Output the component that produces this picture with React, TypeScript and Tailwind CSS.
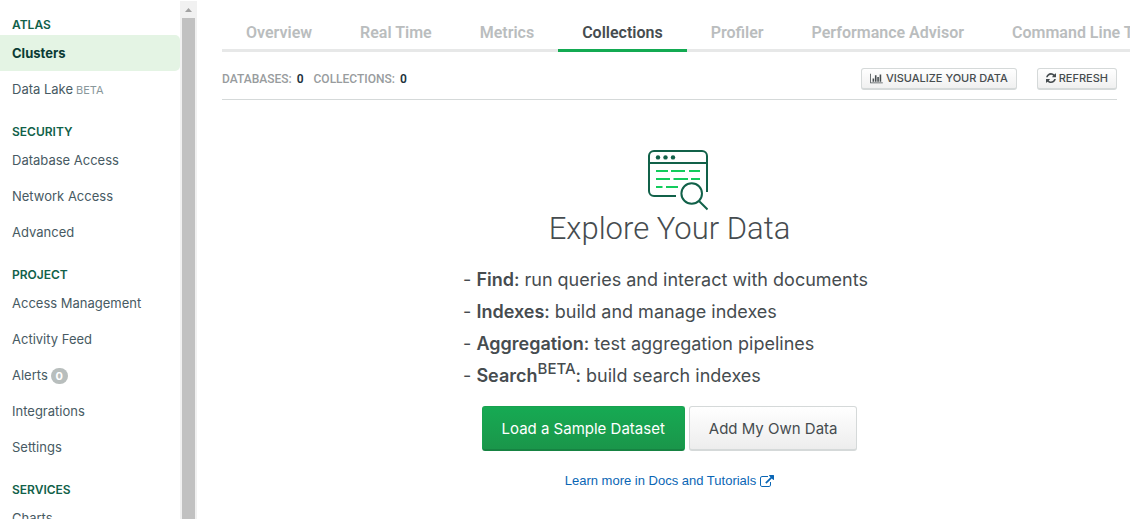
import type { ReactNode } from "react";

type NavItem = { label: string; beta?: boolean; count?: number; active?: boolean };
type NavSection = { title: string; items: NavItem[] };

const sections: NavSection[] = [
  { title: "ATLAS", items: [{ label: "Clusters", active: true }, { label: "Data Lake", beta: true }] },
  {
    title: "SECURITY",
    items: [{ label: "Database Access" }, { label: "Network Access" }, { label: "Advanced" }],
  },
  {
    title: "PROJECT",
    items: [
      { label: "Access Management" },
      { label: "Activity Feed" },
      { label: "Alerts", count: 0 },
      { label: "Integrations" },
      { label: "Settings" },
    ],
  },
  { title: "SERVICES", items: [{ label: "Charts" }] },
];

const tabs = [
  "Overview",
  "Real Time",
  "Metrics",
  "Collections",
  "Profiler",
  "Performance Advisor",
  "Command Line Tools",
];

function ChartIcon() {
  return (
    <svg viewBox="0 0 2048 1792" className="h-[11px] w-[13px] shrink-0" fill="currentColor" aria-hidden="true">
      <path d="M640 896v512h-256v-512h256zm384-512v1024h-256v-1024h256zm1024 1152v128h-2048v-1536h128v1408h1920zm-640-896v768h-256v-768h256zm384-384v1152h-256v-1152h256z" />
    </svg>
  );
}

function RefreshIcon() {
  return (
    <svg viewBox="0 0 1536 1664" className="h-[11px] w-2.5 shrink-0" fill="currentColor" aria-hidden="true">
      <path d="M1511 928q0 5-1 7-64 268-268 434.5t-478 166.500q-146 0-282.500-55t-243.500-157l-129 129q-19 19-45 19t-45-19-19-45v-448q0-26 19-45t45-19h448q26 0 45 19t19 45-19 45l-137 137q71 66 161 102t187 36q134 0 250-65t186-179q11-17 53-117 8-23 30-23h192q13 0 22.500 9.500t9.500 22.500zm25-800v448q0 26-19 45t-45 19h-448q-26 0-45-19t-19-45 19-45l138-138q-148-137-349-137-134 0-250 65t-186 179q-11 17-53 117-8 23-30 23h-199q-13 0-22.500-9.500t-9.500-22.500v-7q65-268 270-434.500t480-166.500q146 0 284 55.500t245 156.500l130-129q19-19 45-19t45 19 19 45z" />
    </svg>
  );
}

function ExternalIcon() {
  return (
    <svg viewBox="0 0 1792 1664" className="h-[13px] w-3.5 shrink-0" fill="currentColor" aria-hidden="true">
      <path d="M1408 928v320q0 119-84.500 203.500t-203.500 84.500h-832q-119 0-203.500-84.500t-84.500-203.500v-832q0-119 84.500-203.500t203.500-84.500h704q14 0 23 9t9 23v64q0 14-9 23t-23 9h-704q-66 0-113 47t-47 113v832q0 66 47 113t113 47h832q66 0 113-47t47-113v-320q0-14 9-23t23-9h64q14 0 23 9t9 23zm384-864v512q0 26-19 45t-45 19-45-19l-176-176-652 652q-10 10-23 10t-23-10l-114-114q-10-10-10-23t10-23l652-652-176-176q-19-19-19-45t19-45 45-19h512q26 0 45 19t19 45z" />
    </svg>
  );
}

function ExploreIllustration() {
  return (
    <svg viewBox="0 0 62 63" className="h-[63px] w-[62px]" fill="none" aria-hidden="true">
      <g stroke="#116149" strokeWidth="2">
        <path d="M30 48H8a5 5 0 0 1-5-5V8a5 5 0 0 1 5-5h48a5 5 0 0 1 5 5v36" />
        <path d="M3 15h58" />
        <circle cx="45.700" cy="45.500" r="10.300" />
        <path d="M53 53l8.500 8.500" />
      </g>
      <g fill="#116149">
        <circle cx="12" cy="9.400" r="2.200" />
        <circle cx="19.500" cy="9.400" r="2.200" />
        <circle cx="27" cy="9.400" r="2.200" />
      </g>
      <path
        d="M10 23h12M25 23h14M43 23h11M10 31h14M27.500 31h14.500M45 31h9M10 39h6.500M20 39h12"
        stroke="#13cc5c"
        strokeWidth="2"
      />
    </svg>
  );
}

function SmallButton({ children }: { children: ReactNode }) {
  return (
    <button
      type="button"
      className="flex h-[22px] items-center gap-[3px] rounded-[3px] border border-b-2 border-[#d5d9d9] bg-gradient-to-b from-white to-[#f0f0f0] px-2 text-[11px] font-medium text-[#464c4f]"
    >
      {children}
    </button>
  );
}

function Feature({ name, sup, children }: { name: string; sup?: string; children: ReactNode }) {
  return (
    <li>
      - <strong className="font-semibold">{name}</strong>
      {sup && <sup className="-top-2 text-[15px] font-medium">{sup}</sup>}
      <span className="font-medium">:</span> {children}
    </li>
  );
}

export default function App() {
  return (
    <div className="flex h-screen overflow-hidden bg-white font-['Inter','Liberation_Sans',sans-serif] text-[#464c4f]">
      <nav aria-label="Project" className="w-[180px] shrink-0 overflow-hidden">
        {sections.map((section) => (
          <section key={section.title}>
            <h2 className="flex h-[35px] items-end pb-0.5 pl-3 text-xs leading-4 font-semibold text-[#116149]">
              {section.title}
            </h2>
            <ul>
              {section.items.map((item) => (
                <li key={item.label}>
                  <a
                    href="#"
                    aria-current={item.active ? "page" : undefined}
                    className={
                      item.active
                        ? "flex h-9 items-center rounded-r-[5px] bg-[#e4f4e4] pt-0.5 pl-3 text-[13px] font-bold text-[#0b3b35]"
                        : "flex h-9 items-center gap-[3px] pt-0.5 pl-3 text-[13px] text-[#475a63]"
                    }
                  >
                    {item.label}
                    {item.beta && <span className="text-[11px] text-[#89979b]">BETA</span>}
                    {item.count !== undefined && (
                      <span className="flex h-4 w-[17px] items-center justify-center rounded-full bg-[#b8bebd] text-[11px] font-bold text-white">
                        {item.count}
                      </span>
                    )}
                  </a>
                </li>
              ))}
            </ul>
          </section>
        ))}
      </nav>

      <div aria-hidden="true" className="mt-px flex w-[17px] shrink-0 flex-col items-center bg-[#f1f1f1]">
        <div className="flex h-[17px] shrink-0 items-center justify-center">
          <svg viewBox="0 0 7 4" className="h-1 w-[7px]" fill="#a3a3a3">
            <path d="M3.500 0 7 4H0z" />
          </svg>
        </div>
        <div className="w-[13px] grow bg-[#c1c1c1]" />
      </div>

      <main className="min-w-0 grow pt-3.5 pl-[25px]">
        <div className="overflow-hidden">
          <div role="tablist" className="flex min-w-max font-['Roboto',sans-serif]">
            {tabs.map((tab) => (
              <button
                key={tab}
                type="button"
                role="tab"
                aria-selected={tab === "Collections"}
                className={
                  tab === "Collections"
                    ? "h-[38px] border-b-[3px] border-[#13aa52] px-6 pt-0.5 text-base font-semibold text-[#464c4f]"
                    : "h-[38px] border-b-[3px] border-[#e7e8e8] px-6 pt-0.5 text-base font-semibold text-[#babdbe]"
                }
              >
                {tab}
              </button>
            ))}
          </div>
        </div>

        <div className="mr-[13px]">
          <div className="flex h-12 items-center justify-between border-b border-[#d5d9d9] pt-1.5">
            <dl className="flex gap-2.5 font-['Roboto',sans-serif] text-xs font-medium text-[#989c9e]">
              <div className="flex gap-[5px]">
                <dt>DATABASES:</dt>
                <dd className="font-semibold text-[#21313c]">0</dd>
              </div>
              <div className="flex gap-[5px]">
                <dt>COLLECTIONS:</dt>
                <dd className="font-semibold text-[#21313c]">0</dd>
              </div>
            </dl>
            <div className="flex gap-5">
              <SmallButton>
                <ChartIcon />
                VISUALIZE YOUR DATA
              </SmallButton>
              <SmallButton>
                <RefreshIcon />
                REFRESH
              </SmallButton>
            </div>
          </div>

          <div className="flex flex-col items-center pt-12">
            <div className="pl-[15px]">
              <ExploreIllustration />
            </div>
            <h1 className="font-['Roboto',sans-serif] text-[31px] leading-9 font-light">Explore Your Data</h1>
            <ul className="mt-[17px] pr-2 text-lg leading-8">
              <Feature name="Find">run queries and interact with documents</Feature>
              <Feature name="Indexes">build and manage indexes</Feature>
              <Feature name="Aggregation">test aggregation pipelines</Feature>
              <Feature name="Search" sup="BETA">
                build search indexes
              </Feature>
            </ul>
            <div className="mt-3.5 flex gap-1 text-[15px]">
              <button
                type="button"
                className="h-[45px] rounded-[3px] border border-b-2 border-[#18a14f] border-b-[#168342] bg-gradient-to-b from-[#16aa53] to-[#1a964a] px-[19px] pt-0.5 text-white"
              >
                Load a Sample Dataset
              </button>
              <button
                type="button"
                className="h-[45px] rounded-[3px] border border-b-2 border-[#d5d9d9] bg-gradient-to-b from-white to-[#ededed] px-[19px] pt-0.5"
              >
                Add My Own Data
              </button>
            </div>
            <a
              href="#"
              className="mt-5 flex items-center gap-1 font-['Liberation_Sans',sans-serif] text-[13px] leading-5 text-[#0a66b5]"
            >
              Learn more in Docs and Tutorials
              <ExternalIcon />
            </a>
          </div>
        </div>
      </main>
    </div>
  );
}
